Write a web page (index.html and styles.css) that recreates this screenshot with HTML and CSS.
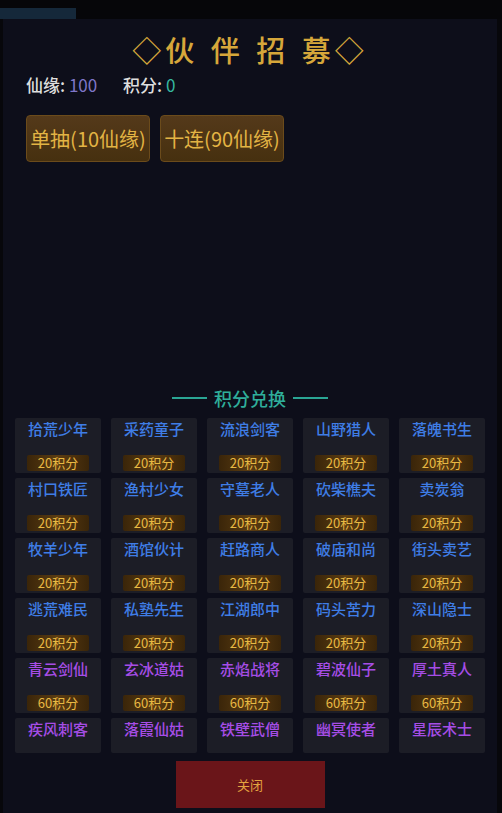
FILE: index.html
```html
<!DOCTYPE html>
<html lang="zh">
<head>
<meta charset="utf-8">
<title>伙伴招募</title>
<link rel="stylesheet" href="styles.css">
</head>
<body>
<div class="topbar"><div class="tab"></div></div>
<div class="panel">
  <h1 class="title">◇伙 伴 招 募◇</h1>
  <div class="stats">
    <span class="label">仙缘:</span> <span class="xy">100</span>
    <span class="label gap">积分:</span> <span class="jf">0</span>
  </div>
  <div class="actions">
    <button class="draw">单抽(10仙缘)</button>
    <button class="draw">十连(90仙缘)</button>
  </div>
  <div class="section-head"><span class="line"></span><span class="head-text">积分兑换</span><span class="line"></span></div>
  <div class="grid">
    <div class="card"><div class="name blue">拾荒少年</div><div class="cost">20积分</div></div>
    <div class="card"><div class="name blue">采药童子</div><div class="cost">20积分</div></div>
    <div class="card"><div class="name blue">流浪剑客</div><div class="cost">20积分</div></div>
    <div class="card"><div class="name blue">山野猎人</div><div class="cost">20积分</div></div>
    <div class="card"><div class="name blue">落魄书生</div><div class="cost">20积分</div></div>

    <div class="card"><div class="name blue">村口铁匠</div><div class="cost">20积分</div></div>
    <div class="card"><div class="name blue">渔村少女</div><div class="cost">20积分</div></div>
    <div class="card"><div class="name blue">守墓老人</div><div class="cost">20积分</div></div>
    <div class="card"><div class="name blue">砍柴樵夫</div><div class="cost">20积分</div></div>
    <div class="card"><div class="name blue">卖炭翁</div><div class="cost">20积分</div></div>

    <div class="card"><div class="name blue">牧羊少年</div><div class="cost">20积分</div></div>
    <div class="card"><div class="name blue">酒馆伙计</div><div class="cost">20积分</div></div>
    <div class="card"><div class="name blue">赶路商人</div><div class="cost">20积分</div></div>
    <div class="card"><div class="name blue">破庙和尚</div><div class="cost">20积分</div></div>
    <div class="card"><div class="name blue">街头卖艺</div><div class="cost">20积分</div></div>

    <div class="card"><div class="name blue">逃荒难民</div><div class="cost">20积分</div></div>
    <div class="card"><div class="name blue">私塾先生</div><div class="cost">20积分</div></div>
    <div class="card"><div class="name blue">江湖郎中</div><div class="cost">20积分</div></div>
    <div class="card"><div class="name blue">码头苦力</div><div class="cost">20积分</div></div>
    <div class="card"><div class="name blue">深山隐士</div><div class="cost">20积分</div></div>

    <div class="card"><div class="name purple">青云剑仙</div><div class="cost">60积分</div></div>
    <div class="card"><div class="name purple">玄冰道姑</div><div class="cost">60积分</div></div>
    <div class="card"><div class="name purple">赤焰战将</div><div class="cost">60积分</div></div>
    <div class="card"><div class="name purple">碧波仙子</div><div class="cost">60积分</div></div>
    <div class="card"><div class="name purple">厚土真人</div><div class="cost">60积分</div></div>

    <div class="card"><div class="name purple">疾风刺客</div></div>
    <div class="card"><div class="name purple">落霞仙姑</div></div>
    <div class="card"><div class="name purple">铁壁武僧</div></div>
    <div class="card"><div class="name purple">幽冥使者</div></div>
    <div class="card"><div class="name purple">星辰术士</div></div>
  </div>
  <div class="footer"><button class="close">关闭</button></div>
</div>
</body>
</html>
```

FILE: styles.css
```css
* { box-sizing: border-box; }
html, body {
  margin: 0;
  padding: 0;
  background: #07070b;
  width: 502px;
  height: 813px;
  overflow: hidden;
  font-family: "Noto Sans CJK SC", "Noto Sans", sans-serif;
}
.topbar {
  height: 19px;
  padding-top: 8px;
  background: #060609;
}
.tab {
  width: 76px;
  height: 11px;
  background: #15283a;
}
.panel {
  margin: 0 5px 0 3px;
  height: 794px;
  background: #0d0e1a;
  padding: 12px 0 0 0;
  display: flex;
  flex-direction: column;
}
.title {
  margin: 0;
  text-align: center;
  font-size: 29px;
  line-height: 36px;
  font-weight: 500;
  color: #d6a73a;
  letter-spacing: 4px;
  word-spacing: 2px;
}
.stats {
  margin: 8px 0 0 23px;
  font-size: 17px;
  line-height: 20px;
  font-weight: 500;
  color: #dcdcdc;
}
.label { color: #dedede; }
.label.gap { margin-left: 22px; }
.xy { color: #7f76c8; font-weight: 400; }
.jf { color: #35b8a0; font-weight: 400; }
.actions {
  margin: 20px 0 0 23px;
  display: flex;
  gap: 10px;
}
.draw {
  width: 124px;
  height: 47px;
  padding: 0;
  border: 1px solid #6b4b1b;
  border-radius: 4px;
  background: linear-gradient(#54391a, #46300f);
  color: #e3b444;
  font-family: inherit;
  font-size: 20px;
  white-space: nowrap;
}
.section-head {
  margin-top: 225px;
  height: 22px;
  display: flex;
  align-items: center;
  justify-content: center;
  gap: 7px;
}
.line {
  width: 35px;
  height: 2px;
  background: #2aa594;
}
.head-text {
  font-size: 18px;
  line-height: 22px;
  font-weight: 500;
  color: #2fae9b;
}
.grid {
  margin: 9px 0 0 12px;
  width: 470px;
  display: grid;
  grid-template-columns: repeat(5, 86px);
  grid-template-rows: repeat(5, 55px) 35px;
  column-gap: 10px;
  row-gap: 5px;
}
.card {
  background: #1c1d26;
  border-radius: 2px;
  display: flex;
  flex-direction: column;
  align-items: center;
  padding-top: 2px;
}
.name {
  font-size: 15px;
  line-height: 18px;
  font-weight: 500;
}
.name.blue { color: #3f7de6; }
.name.purple { color: #a64de6; }
.cost {
  margin-top: 17px;
  width: 62px;
  height: 16px;
  border-radius: 2px;
  background: linear-gradient(90deg, #3a2509, #5c3d12 50%, #3a2509);
  color: #e9b943;
  font-size: 13px;
  line-height: 16px;
  text-align: center;
}
.footer {
  margin-top: 8px;
  display: flex;
  justify-content: center;
}
.close {
  width: 149px;
  height: 47px;
  border: none;
  padding: 0;
  background: #6a1519;
  color: #e3a440;
  font-family: inherit;
  font-size: 13px;
}
```
